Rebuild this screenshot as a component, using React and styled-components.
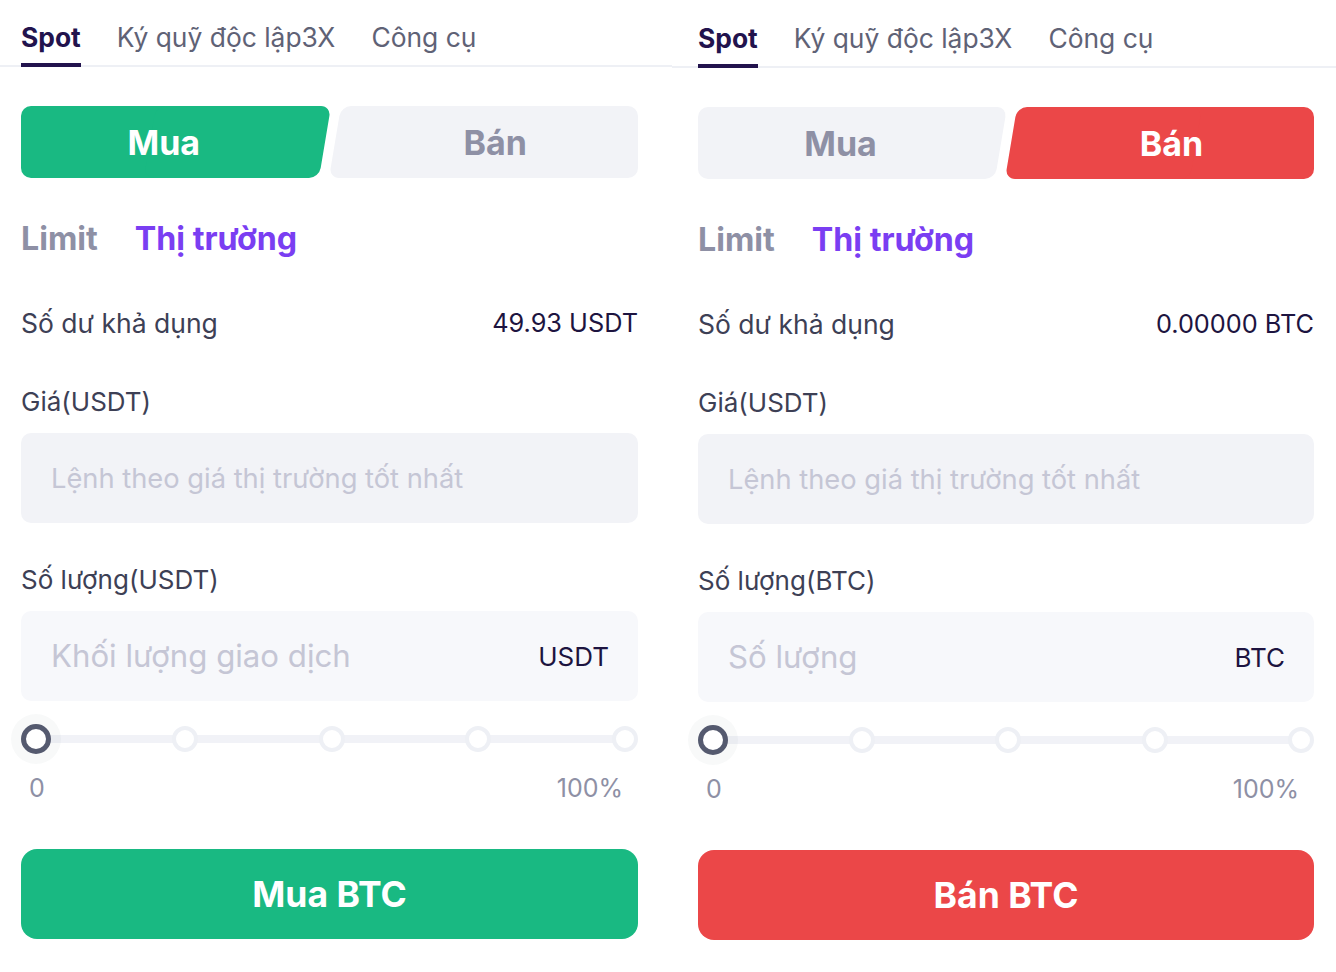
import React from 'react';
import styled, { createGlobalStyle } from 'styled-components';

const GlobalStyle = createGlobalStyle`
  html, body {
    margin: 0;
    padding: 0;
    background: #ffffff;
  }
  body {
    font-family: Inter, "Noto Sans", "Liberation Sans", sans-serif;
    -webkit-font-smoothing: antialiased;
  }
`;

const panels = [
  {
    side: 'buy',
    balance: '49.93 USDT',
    qtyLabel: 'Số lượng(USDT)',
    qtyPlaceholder: 'Khối lượng giao dịch',
    unit: 'USDT',
    action: 'Mua BTC',
  },
  {
    side: 'sell',
    balance: '0.00000 BTC',
    qtyLabel: 'Số lượng(BTC)',
    qtyPlaceholder: 'Số lượng',
    unit: 'BTC',
    action: 'Bán BTC',
  },
];

const GREEN = '#19b982';
const RED = '#eb4748';

export default function App() {
  return (
    <>
      <GlobalStyle />
      <Page>
        {panels.map((p) => (
          <TradePanel key={p.side} {...p} />
        ))}
      </Page>
    </>
  );
}

function TradePanel({ side, balance, qtyLabel, qtyPlaceholder, unit, action }) {
  const isBuy = side === 'buy';
  return (
    <Panel $sell={!isBuy}>
      <TabBar>
        <Tab $active>Spot</Tab>
        <Tab>Ký quỹ độc lập3X</Tab>
        <Tab>Công cụ</Tab>
      </TabBar>

      <Body>
        <Segmented>
          <SegButton $pos="left" $active={isBuy} $color={GREEN}>
            <span>Mua</span>
          </SegButton>
          <SegButton $pos="right" $active={!isBuy} $color={RED}>
            <span>Bán</span>
          </SegButton>
        </Segmented>

        <OrderTypes>
          <OrderType>Limit</OrderType>
          <OrderType $active>Thị trường</OrderType>
        </OrderTypes>

        <BalanceRow>
          <span>Số dư khả dụng</span>
          <BalanceValue>{balance}</BalanceValue>
        </BalanceRow>

        <FieldLabel $top={49}>Giá(USDT)</FieldLabel>
        <InputBox $disabled>
          <Placeholder $size={27.3}>Lệnh theo giá thị trường tốt nhất</Placeholder>
        </InputBox>

        <FieldLabel $top={42}>{qtyLabel}</FieldLabel>
        <InputBox>
          <Placeholder $size={31.2}>{qtyPlaceholder}</Placeholder>
          <Unit>{unit}</Unit>
        </InputBox>

        <Slider>
          <Handle />
          <Dot />
          <Dot />
          <Dot />
          <Dot />
        </Slider>
        <SliderLabels>
          <span>0</span>
          <span>100%</span>
        </SliderLabels>

        <SubmitButton $color={isBuy ? GREEN : RED}>{action}</SubmitButton>
      </Body>
    </Panel>
  );
}

const Page = styled.div`
  display: flex;
  width: 1336px;
  height: 972px;
  overflow: hidden;
`;

const Panel = styled.section`
  width: ${(p) => (p.$sell ? '664px' : '672px')};
  padding-top: ${(p) => (p.$sell ? '1px' : '0')};
  box-sizing: border-box;
  --pad-l: ${(p) => (p.$sell ? '26px' : '21px')};
  --pad-r: ${(p) => (p.$sell ? '22px' : '34px')};
`;

const TabBar = styled.nav`
  display: flex;
  gap: 36px;
  height: 65px;
  padding-left: var(--pad-l);
  border-bottom: 2px solid #eef0f5;
`;

const Tab = styled.div`
  position: relative;
  padding-top: 20px;
  font-size: 26.4px;
  line-height: 34px;
  font-weight: ${(p) => (p.$active ? 700 : 400)};
  color: ${(p) => (p.$active ? '#22134d' : '#5f6276')};

  &::after {
    content: '';
    display: ${(p) => (p.$active ? 'block' : 'none')};
    position: absolute;
    left: 0;
    right: 0;
    bottom: -2px;
    height: 4px;
    background: #22134d;
  }
`;

const Body = styled.div`
  display: flex;
  flex-direction: column;
  padding: 0 var(--pad-r) 0 var(--pad-l);
`;

const Segmented = styled.div`
  display: flex;
  height: 72px;
  margin-top: 39px;
`;

const SegButton = styled.div`
  position: relative;
  flex: 1;
  display: flex;
  align-items: center;
  justify-content: center;
  padding: ${(p) => (p.$pos === 'left' ? '0 22px 0 0' : '0 0 0 24px')};
  font-size: 34px;
  font-weight: 700;
  color: ${(p) => (p.$active ? '#ffffff' : '#8e90a5')};

  &::before,
  &::after {
    content: '';
    position: absolute;
    top: 0;
    bottom: 0;
    border-radius: 10px;
    background: ${(p) => (p.$active ? p.$color : '#f2f3f7')};
  }

  &::before {
    ${(p) => (p.$pos === 'left' ? 'left: 0; right: 50%;' : 'right: 0; left: 50%;')}
  }

  &::after {
    transform-origin: bottom;
    transform: skewX(-9.5deg);
    ${(p) => (p.$pos === 'left' ? 'left: 40%; right: 10px;' : 'left: 0; right: 40%;')}
  }

  span {
    position: relative;
    z-index: 1;
  }
`;

const OrderTypes = styled.div`
  display: flex;
  gap: 37px;
  margin-top: 43px;
  line-height: 36px;
`;

const OrderType = styled.div`
  font-size: 32.2px;
  font-weight: 700;
  color: ${(p) => (p.$active ? '#7a3ef2' : '#8e90a5')};
`;

const BalanceRow = styled.div`
  display: flex;
  justify-content: space-between;
  margin-top: 51px;
  font-size: 26.5px;
  line-height: 30px;
  color: #3d4055;
`;

const BalanceValue = styled.span`
  font-size: 25.3px;
  color: #1d1440;
`;

const FieldLabel = styled.div`
  margin-top: ${(p) => p.$top}px;
  font-size: 26px;
  line-height: 30px;
  color: #3d4055;
`;

const InputBox = styled.div`
  display: flex;
  align-items: center;
  justify-content: space-between;
  height: 90px;
  margin-top: 16px;
  padding: 0 29px 0 30px;
  border-radius: 10px;
  background: ${(p) => (p.$disabled ? '#f2f3f7' : '#f7f8fb')};
`;

const Placeholder = styled.span`
  font-size: ${(p) => p.$size}px;
  color: #c5c6d5;
`;

const Unit = styled.span`
  font-size: 26px;
  color: #1d1440;
`;

const Slider = styled.div`
  position: relative;
  display: flex;
  align-items: center;
  justify-content: space-between;
  height: 30px;
  margin-top: 23px;

  &::before {
    content: '';
    position: absolute;
    left: 14px;
    right: 13px;
    top: 11px;
    height: 8px;
    background: #f1f2f7;
  }
`;

const Dot = styled.span`
  position: relative;
  width: 26px;
  height: 26px;
  box-sizing: border-box;
  border: 4px solid #eef0f5;
  border-radius: 50%;
  background: #ffffff;
`;

const Handle = styled.span`
  position: relative;
  z-index: 1;
  width: 30px;
  height: 30px;
  box-sizing: border-box;
  border: 5px solid #555a6f;
  border-radius: 50%;
  background: #ffffff;
  box-shadow: 0 0 0 10px rgba(85, 90, 111, 0.04);
`;

const SliderLabels = styled.div`
  display: flex;
  justify-content: space-between;
  margin-top: 20px;
  padding: 0 15px 0 8px;
  font-size: 25px;
  line-height: 28px;
  color: #8e90a5;
`;

const SubmitButton = styled.button`
  height: 90px;
  margin-top: 47px;
  border: none;
  border-radius: 16px;
  background: ${(p) => p.$color};
  color: #ffffff;
  font-family: inherit;
  font-size: 35.5px;
  font-weight: 700;
  cursor: pointer;
`;
